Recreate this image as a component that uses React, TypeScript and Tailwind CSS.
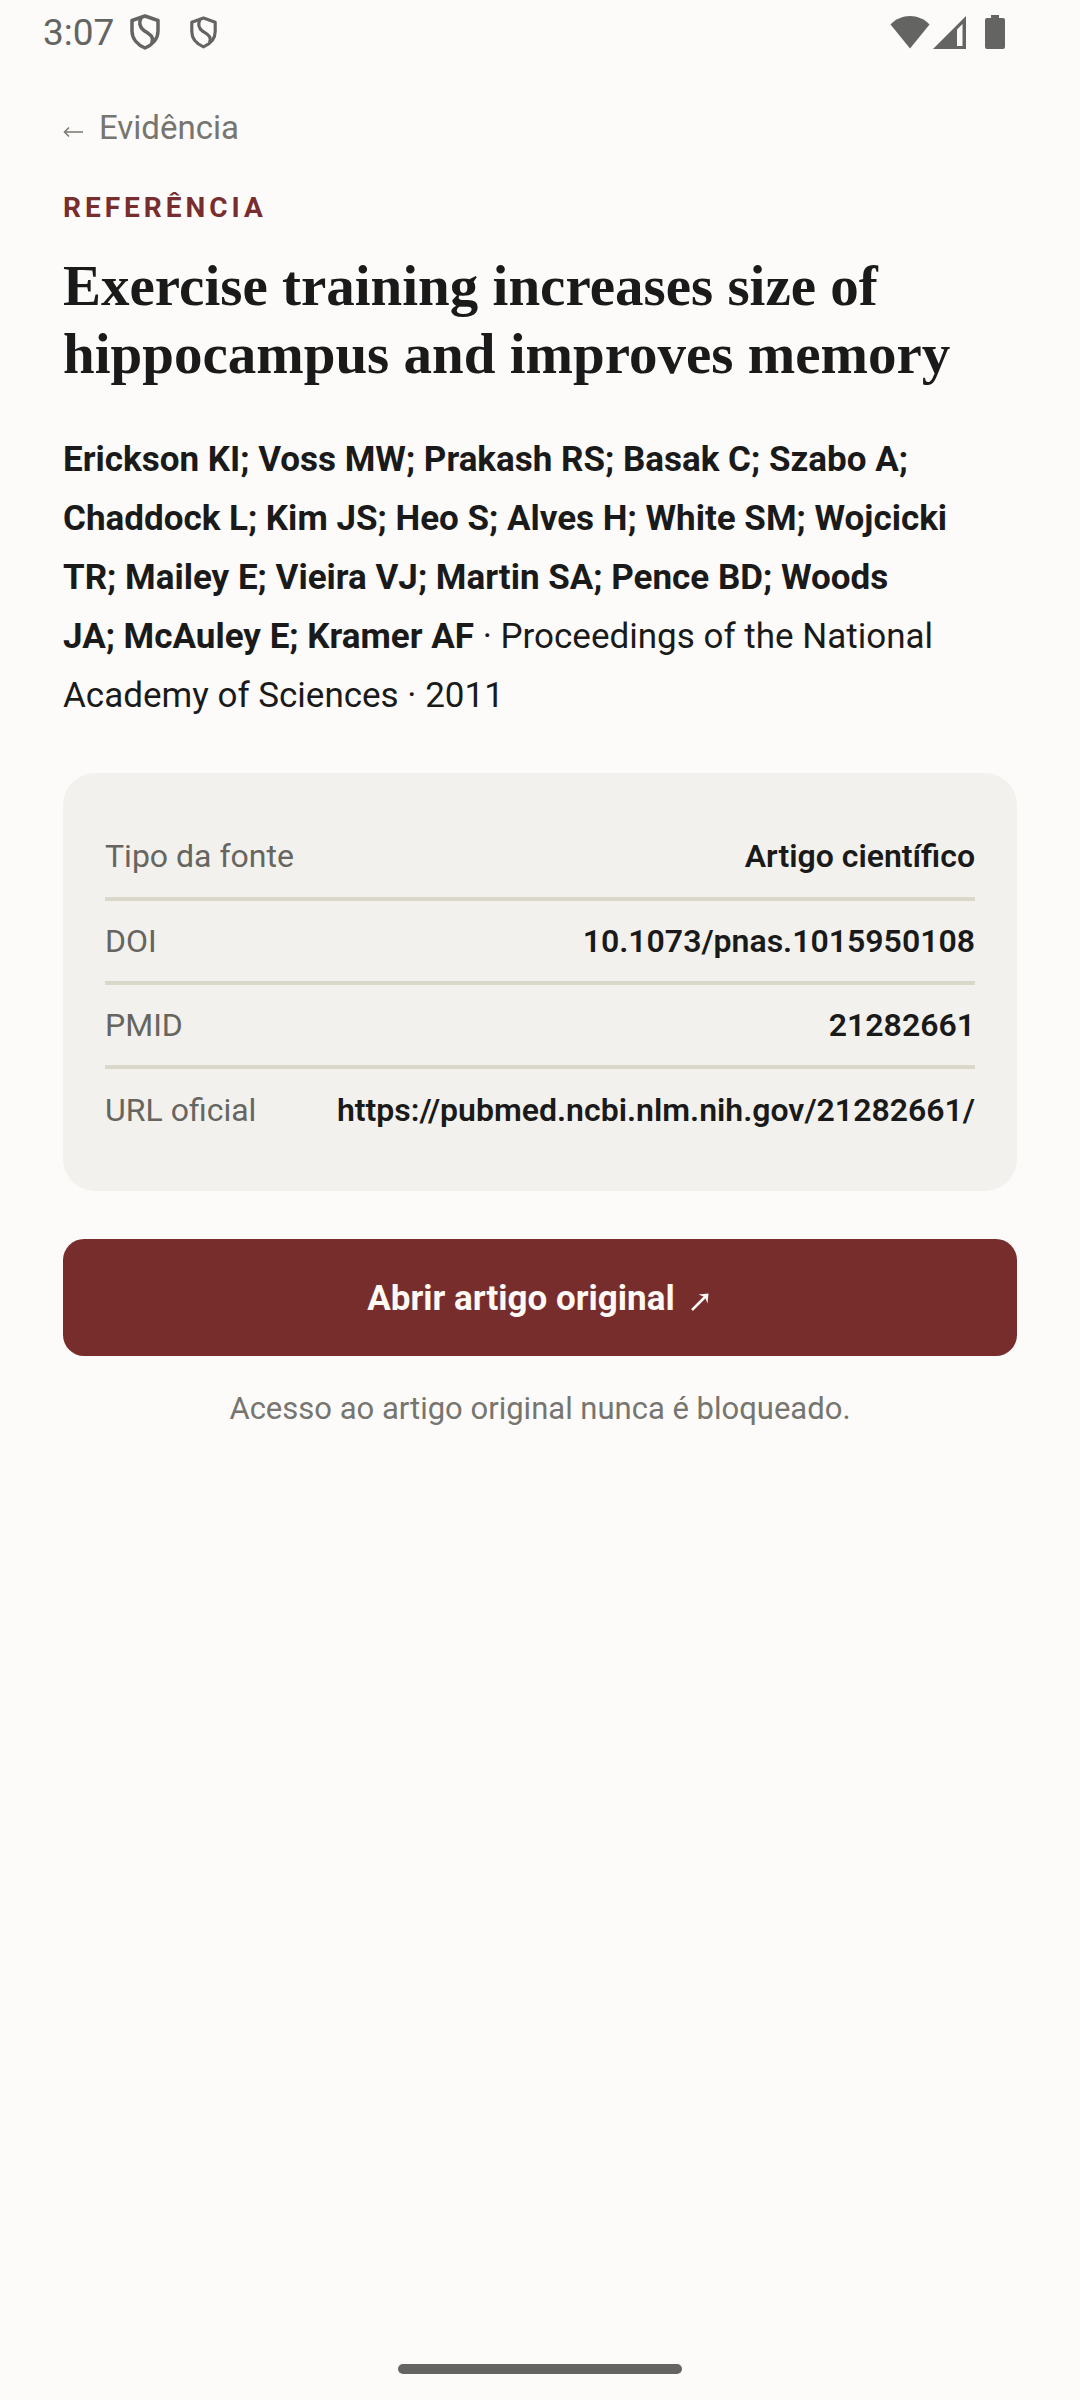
const details = [
  { id: 'type', label: 'Tipo da fonte', value: 'Artigo científico' },
  { id: 'doi', label: 'DOI', value: '10.1073/pnas.1015950108' },
  { id: 'pmid', label: 'PMID', value: '21282661' },
  { id: 'url', label: 'URL oficial', value: 'https://pubmed.ncbi.nlm.nih.gov/21282661/' },
];

function ShieldIcon({ className }: { className: string }) {
  return (
    <svg viewBox="0 0 30 36" fill="none" stroke="currentColor" strokeWidth="3.500" strokeLinejoin="round" strokeLinecap="round" className={className} aria-hidden="true">
      <path d="M15 2 L28 6.500 V17 C28 25 22 31 15 34 C8 31 2 25 2 17 V6.500 Z" />
      <path d="M11 4 C8.500 9 9.500 13 14 16.500 C20 20.500 24 22.500 22 28" />
    </svg>
  );
}

function StatusBar() {
  return (
    <header className="flex h-16 items-center justify-between pl-[43px] pr-[75px] text-[#646462]">
      <div className="flex items-center">
        <span className="text-[37px] leading-none">3:07</span>
        <ShieldIcon className="ml-4 h-9 w-[30px]" />
        <ShieldIcon className="ml-[30px] h-[33px] w-[27px]" />
      </div>
      <div className="flex items-center">
        <svg viewBox="0 0 40 34" fill="currentColor" className="h-[34px] w-10" aria-hidden="true">
          <path d="M20 33.500 L0.500 9.500 C11 -2 29 -2 39.500 9.500 Z" />
        </svg>
        <svg viewBox="0 0 33 34" fill="currentColor" fillRule="evenodd" className="ml-[3px] h-[34px] w-[33px]" aria-hidden="true">
          <path d="M33 1 V34 H0 Z M29.500 9 L24 14.500 V31 H29.500 Z" />
        </svg>
        <svg viewBox="0 0 20 34" fill="currentColor" className="ml-[19px] h-[34px] w-5" aria-hidden="true">
          <path d="M6 0 H14 V3 H18 Q20 3 20 5 V32 Q20 34 18 34 H2 Q0 34 0 32 V5 Q0 3 2 3 H6 Z" />
        </svg>
      </div>
    </header>
  );
}

export default function App() {
  return (
    <div className="flex min-h-screen flex-col bg-[#fcfbf9] font-[Roboto,sans-serif] text-[#1a1a1a]">
      <StatusBar />

      <main className="flex flex-1 flex-col px-[63px] pt-10">
        <a href="#evidencia" className="flex items-center gap-4 self-start text-[33px] leading-[48px] text-[#76756f]">
          <svg viewBox="0 0 20 12" fill="none" stroke="currentColor" strokeWidth="1.500" className="mt-2 h-3 w-5" aria-hidden="true">
            <path d="M20 6 H2" />
            <path d="M6 1.500 L1.500 6 L6 10.500" />
          </svg>
          Evidência
        </a>

        <p className="mt-9 text-[28px] font-bold leading-10 tracking-[4px] text-[#782d2f]">REFERÊNCIA</p>

        <h1 className="mt-6 font-['Liberation_Serif',serif] text-[57px] font-bold leading-[68px]">
          Exercise training increases size of hippocampus and improves memory
        </h1>

        <p className="mt-[42px] text-[35px] leading-[59px]">
          <strong className="font-bold">
            Erickson KI; Voss MW; Prakash RS; Basak C; Szabo A; Chaddock L; Kim JS; Heo S; Alves H; White SM; Wojcicki
            <br />
            TR; Mailey E; Vieira VJ; Martin SA; Pence BD; Woods
            <br />
            JA; McAuley E; Kramer AF
          </strong>{' '}
          · Proceedings of the National Academy of Sciences · 2011
        </p>

        <section className="mt-12 rounded-[32px] bg-[#f2f1ed] px-[42px] pb-10 pt-[42px]">
          <table className="w-full text-[32px] leading-10">
            <tbody>
              {details.map((item) => (
                <tr key={item.id} className="h-[84px] border-b-4 border-[#dad8c9] last:border-b-0">
                  <th scope="row" className="text-left font-normal text-[#66655f]">{item.label}</th>
                  <td className="text-right font-semibold">{item.value}</td>
                </tr>
              ))}
            </tbody>
          </table>
        </section>

        <button type="button" className="mt-12 flex h-[117px] items-center justify-center gap-4 rounded-[21px] bg-[#782d2d] pr-1 pt-1 text-[35px] font-bold text-[#fcf8f4]">
          Abrir artigo original
          <svg viewBox="0 0 18 18" fill="none" stroke="currentColor" strokeWidth="2.500" className="mt-1 h-[18px] w-[18px]" aria-hidden="true">
            <path d="M1 17 L15 3" />
            <path d="M7.500 1.500 L17.500 0.500 L16.500 10.500 L14.500 5.500 L12.500 3.500 Z" fill="currentColor" stroke="none" />
          </svg>
        </button>

        <p className="mt-8 text-center text-[31px] leading-[42px] text-[#76756f]">Acesso ao artigo original nunca é bloqueado.</p>
      </main>

      <footer className="flex justify-center pb-[26px]">
        <div className="h-[10px] w-[284px] rounded-full bg-[#646462]" />
      </footer>
    </div>
  );
}
